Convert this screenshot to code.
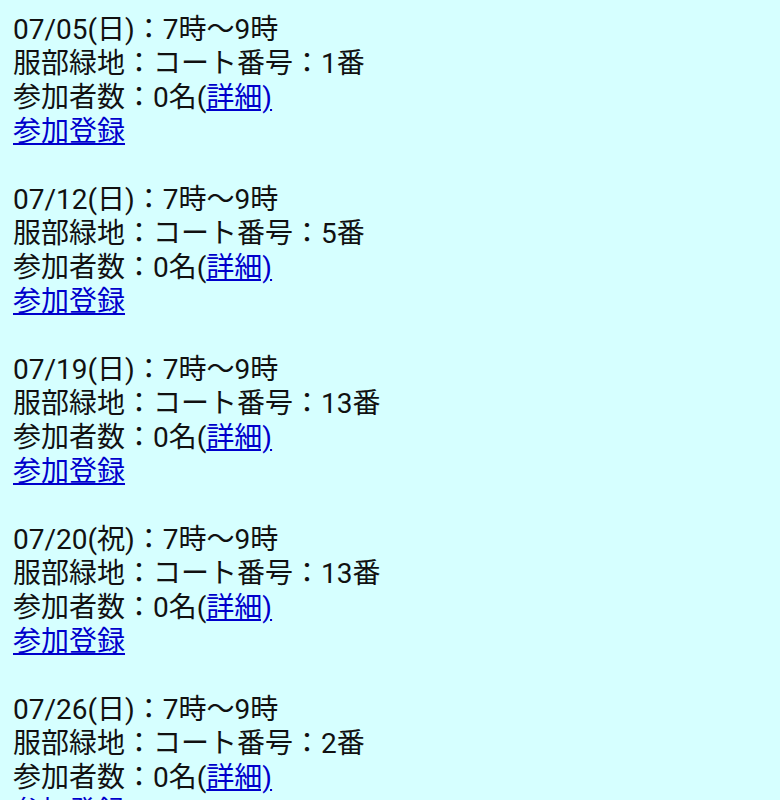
export default function App() {
  const items = [
    { date: "07/05(日)", court: "1" },
    { date: "07/12(日)", court: "5" },
    { date: "07/19(日)", court: "13" },
    { date: "07/20(祝)", court: "13" },
    { date: "07/26(日)", court: "2" },
  ];
  return (
    <div
      className="min-h-[800px] bg-[#d6ffff] pl-[13px] pt-[13px] text-[28px] leading-[34px] text-[#111]"
      style={{ fontFamily: 'Roboto, "Noto Sans CJK JP", sans-serif' }}
    >
      {items.map((it, i) => (
        <div key={i} className="mb-[34px]">
          <div>{it.date}：7時〜9時</div>
          <div>服部緑地：コート番号：{it.court}番</div>
          <div>
            参加者数：0名(<a href="#" className="text-[#0000cc] underline">詳細)</a>
          </div>
          <div>
            <a href="#" className="text-[#0000cc] underline">参加登録</a>
          </div>
        </div>
      ))}
    </div>
  );
}
